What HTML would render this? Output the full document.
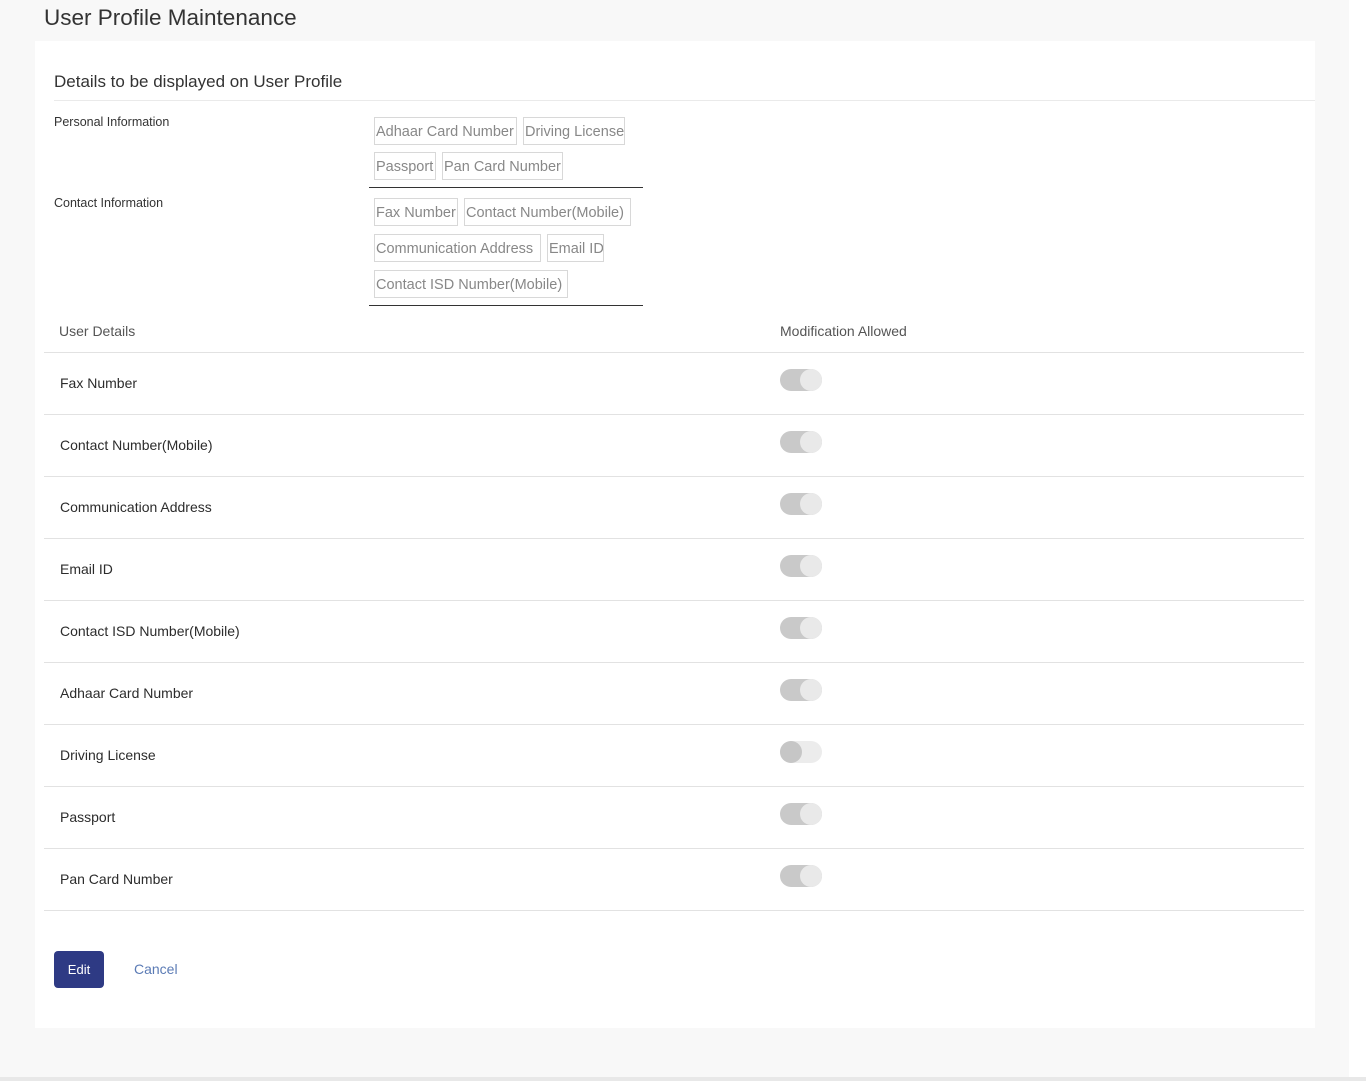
<!DOCTYPE html>
<html><head><style>
body{margin:0;width:1366px;height:1081px;background:#f8f8f8;font-family:"Liberation Sans",sans-serif;position:relative;overflow:hidden;color:#333}
.a{position:absolute;white-space:nowrap}
.card{position:absolute;left:35px;top:41px;width:1280px;height:987px;background:#fff}
.chip{position:absolute;height:28px;line-height:28px;border:1px solid #d8d8d8;font-size:14.5px;color:#888;padding:0 1px;box-sizing:border-box;white-space:nowrap;overflow:hidden}
.hl{position:absolute;left:369px;width:274px;height:1px;background:#333}
.row{position:absolute;left:44px;width:1260px;height:62px;border-bottom:1px solid #e2e2e2;box-sizing:border-box}
.row span{position:absolute;left:16px;top:22px;font-size:14px;color:#2c2c2c}
.tg{position:absolute;left:736px;top:16px;width:42px;height:22px;border-radius:11px;background:#c9c9c9}
.tg:after{content:"";position:absolute;right:0;top:0;width:22px;height:22px;border-radius:11px;background:#e9e9e9}
.tg.off{background:#ececec}
.tg.off:after{left:0;right:auto;background:#c6c6c6}
</style></head><body>
<div style="position:absolute;left:1349px;top:0;width:17px;height:1081px;background:#fff"></div>
<div style="position:absolute;left:0;top:1077px;width:1366px;height:4px;background:#e8e8e8"></div>
<div class="a" style="left:44px;top:5px;font-size:22.5px;color:#333">User Profile Maintenance</div>
<div class="card"></div>
<div class="a" style="left:54px;top:72px;font-size:17px;color:#333">Details to be displayed on User Profile</div>
<div style="position:absolute;left:54px;top:100px;width:1261px;height:1px;background:#eaeaea"></div>
<div class="a" style="left:54px;top:115px;font-size:12.5px">Personal Information</div>
<div class="a" style="left:54px;top:196px;font-size:12.5px">Contact Information</div>
<div class="chip" style="left:374px;top:117px;width:143px">Adhaar Card Number</div>
<div class="chip" style="left:523px;top:117px;width:102px">Driving License</div>
<div class="chip" style="left:374px;top:152px;width:62px">Passport</div>
<div class="chip" style="left:442px;top:152px;width:121px">Pan Card Number</div>
<div class="hl" style="top:187px"></div>
<div class="chip" style="left:374px;top:198px;width:84px">Fax Number</div>
<div class="chip" style="left:464px;top:198px;width:167px">Contact Number(Mobile)</div>
<div class="chip" style="left:374px;top:234px;width:167px">Communication Address</div>
<div class="chip" style="left:547px;top:234px;width:57px">Email ID</div>
<div class="chip" style="left:374px;top:270px;width:194px">Contact ISD Number(Mobile)</div>
<div class="hl" style="top:305px"></div>
<div class="a" style="left:59px;top:323px;font-size:14px;color:#555">User Details</div>
<div class="a" style="left:780px;top:323px;font-size:14px;color:#555">Modification Allowed</div>
<div style="position:absolute;left:44px;top:352px;width:1260px;height:1px;background:#e2e2e2"></div>
<div class="row" style="top:353px"><span>Fax Number</span><div class="tg"></div></div>
<div class="row" style="top:415px"><span>Contact Number(Mobile)</span><div class="tg"></div></div>
<div class="row" style="top:477px"><span>Communication Address</span><div class="tg"></div></div>
<div class="row" style="top:539px"><span>Email ID</span><div class="tg"></div></div>
<div class="row" style="top:601px"><span>Contact ISD Number(Mobile)</span><div class="tg"></div></div>
<div class="row" style="top:663px"><span>Adhaar Card Number</span><div class="tg"></div></div>
<div class="row" style="top:725px"><span>Driving License</span><div class="tg off"></div></div>
<div class="row" style="top:787px"><span>Passport</span><div class="tg"></div></div>
<div class="row" style="top:849px"><span>Pan Card Number</span><div class="tg"></div></div>
<div style="position:absolute;left:54px;top:951px;width:50px;height:37px;background:#2e3a84;border-radius:4px;color:#fff;font-size:13px;line-height:37px;text-align:center">Edit</div>
<div class="a" style="left:134px;top:961px;font-size:14px;color:#5b7bb5">Cancel</div>
</body></html>
